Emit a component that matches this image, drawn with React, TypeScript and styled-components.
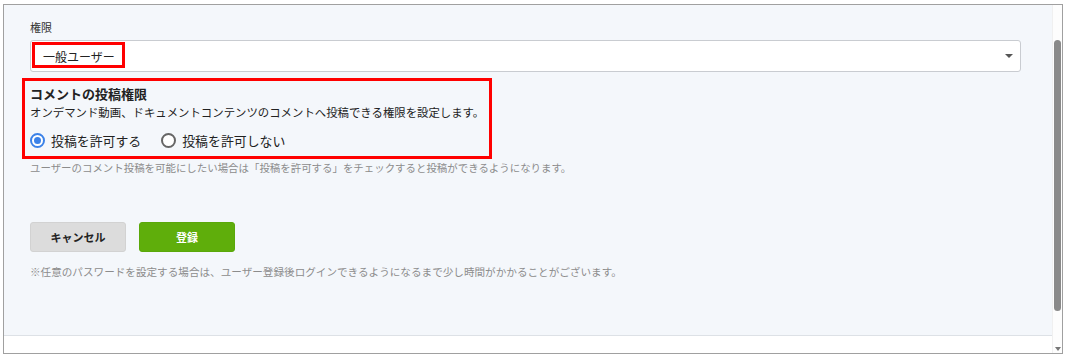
import React from "react";
import styled, { createGlobalStyle } from "styled-components";

const GlobalStyle = createGlobalStyle`
  html, body { margin: 0; padding: 0; background: #ffffff; }
  body { font-family: "Noto Sans CJK JP", "Noto Sans", sans-serif; color: #333; }
  * { box-sizing: border-box; }
`;

const Frame = styled.div`
  margin: 4px 0 0 3px;
  width: 1060px;
  height: 350px;
  border: 1px solid #a0a0a0;
  display: flex;
  background: #fff;
`;

const Main = styled.div`
  width: 1048px;
  display: flex;
  flex-direction: column;
`;

const Panel = styled.div`
  height: 331px;
  background: #f4f7fb;
  border-bottom: 1px solid #dde1e6;
  padding: 14px 31px 0 26px;
  display: flex;
  flex-direction: column;
`;

const Label = styled.div`
  font-size: 11px;
  line-height: 17px;
  color: #333;
  margin-bottom: 4px;
`;

const Select = styled.div`
  position: relative;
  height: 32px;
  background: #fff;
  border: 1px solid #c9ccd1;
  border-radius: 3px;
  display: flex;
  align-items: center;
  padding-left: 12px;
  font-size: 12px;
  color: #222;
`;

const Caret = styled.span`
  position: absolute;
  right: 7px;
  top: 13px;
  width: 0;
  height: 0;
  border-left: 4px solid transparent;
  border-right: 4px solid transparent;
  border-top: 4px solid #555;
`;

const Highlight = styled.div<{ $l: number; $t: number; $w: number; $h: number }>`
  position: absolute;
  left: ${(p) => p.$l}px;
  top: ${(p) => p.$t}px;
  width: ${(p) => p.$w}px;
  height: ${(p) => p.$h}px;
  border: 3px solid #ff0000;
  pointer-events: none;
`;

const Section = styled.div`
  position: relative;
  margin-top: 13px;
`;

const Title = styled.div`
  font-size: 13px;
  font-weight: 700;
  line-height: 18px;
  color: #222;
`;

const Desc = styled.div`
  font-size: 11.4px;
  line-height: 18px;
  color: #222;
`;

const RadioRow = styled.div`
  display: flex;
  align-items: center;
  height: 20px;
  margin-top: 9px;
  gap: 20px;
`;

const RadioItem = styled.label`
  display: flex;
  align-items: center;
  gap: 6px;
  font-size: 12.9px;
  color: #222;
`;

const RadioCircle = styled.span<{ $checked?: boolean }>`
  width: 15px;
  height: 15px;
  border-radius: 50%;
  border: ${(p) => (p.$checked ? "2px solid #3b82e8" : "2px solid #666")};
  background: #fff;
  display: flex;
  align-items: center;
  justify-content: center;
  &::after {
    content: "";
    display: ${(p) => (p.$checked ? "block" : "none")};
    width: 7px;
    height: 7px;
    border-radius: 50%;
    background: #3b82e8;
  }
`;

const Help = styled.div<{ $mt: number; $size: number }>`
  font-size: ${(p) => p.$size}px;
  line-height: 16px;
  color: #8c8c8c;
  margin-top: ${(p) => p.$mt}px;
`;

const Buttons = styled.div`
  display: flex;
  gap: 13px;
  margin-top: 46px;
`;

const Button = styled.button<{ $primary?: boolean }>`
  width: 96px;
  height: 30px;
  border-radius: 3px;
  border: 1px solid ${(p) => (p.$primary ? "#5aa80a" : "#d2d2d2")};
  background: ${(p) => (p.$primary ? "#5fae0b" : "#dcdcdc")};
  color: ${(p) => (p.$primary ? "#fff" : "#222")};
  font-family: inherit;
  font-size: 11px;
  font-weight: 700;
  padding: 0;
`;

const BottomStrip = styled.div`
  flex: 1;
  background: #fff;
`;

const ScrollTrack = styled.div`
  position: relative;
  flex: 1;
  background: #fdfdfd;
  border-left: 1px solid #f0f0f0;
`;

const Thumb = styled.div`
  position: absolute;
  left: 1px;
  top: 35px;
  width: 7px;
  height: 271px;
  border-radius: 4px;
  background: #8a8a8a;
`;

const DownArrow = styled.span`
  position: absolute;
  left: 2px;
  bottom: 2px;
  width: 0;
  height: 0;
  border-left: 3px solid transparent;
  border-right: 3px solid transparent;
  border-top: 4px solid #777;
`;

export default function App() {
  return (
    <>
      <GlobalStyle />
      <Frame>
        <Main>
          <Panel>
            <Label>権限</Label>
            <Select>
              一般ユーザー
              <Caret />
              <Highlight $l={1} $t={1} $w={93} $h={26} />
            </Select>
            <Section>
              <Title>コメントの投稿権限</Title>
              <Desc>オンデマンド動画、ドキュメントコンテンツのコメントへ投稿できる権限を設定します。</Desc>
              <RadioRow>
                <RadioItem>
                  <RadioCircle $checked />
                  投稿を許可する
                </RadioItem>
                <RadioItem>
                  <RadioCircle />
                  投稿を許可しない
                </RadioItem>
              </RadioRow>
              <Highlight $l={-8} $t={-7} $w={470} $h={81} />
            </Section>
            <Help $mt={10} $size={10.45}>
              ユーザーのコメント投稿を可能にしたい場合は「投稿を許可する」をチェックすると投稿ができるようになります。
            </Help>
            <Buttons>
              <Button>キャンセル</Button>
              <Button $primary>登録</Button>
            </Buttons>
            <Help $mt={12} $size={10.6}>
              ※任意のパスワードを設定する場合は、ユーザー登録後ログインできるようになるまで少し時間がかかることがございます。
            </Help>
          </Panel>
          <BottomStrip />
        </Main>
        <ScrollTrack>
          <Thumb />
          <DownArrow />
        </ScrollTrack>
      </Frame>
    </>
  );
}
